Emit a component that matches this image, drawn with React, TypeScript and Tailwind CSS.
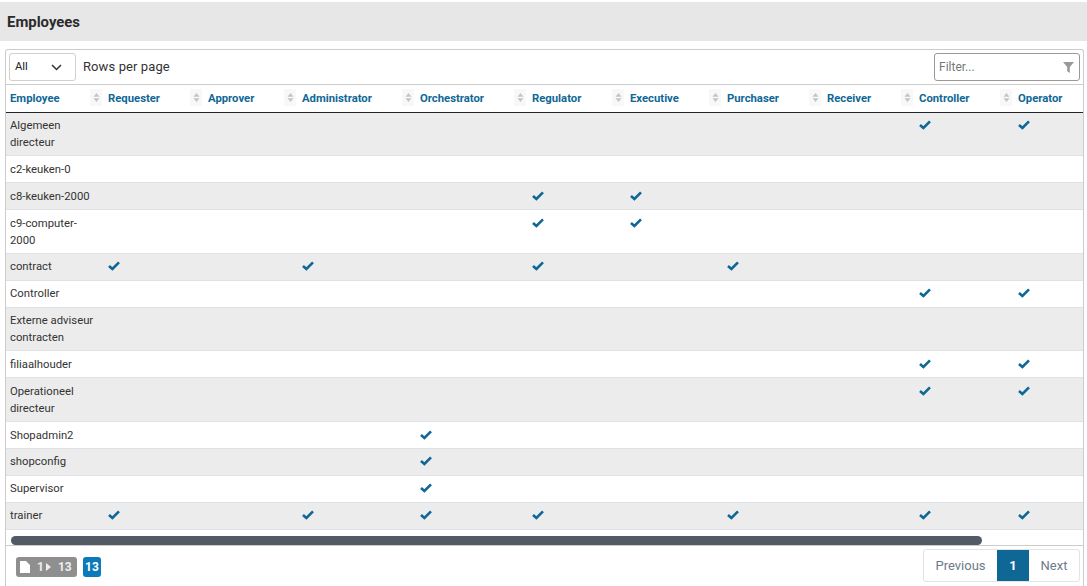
import React from "react";

const cols = [
  { n: "Employee", w: 98 },
  { n: "Requester", w: 100 },
  { n: "Approver", w: 94 },
  { n: "Administrator", w: 118 },
  { n: "Orchestrator", w: 112 },
  { n: "Regulator", w: 98 },
  { n: "Executive", w: 97 },
  { n: "Purchaser", w: 100 },
  { n: "Receiver", w: 92 },
  { n: "Controller", w: 99 },
  { n: "Operator", w: 100 },
];

const rows: { name: string[]; c: number[]; h: string; low: boolean }[] = [
  { name: ["Algemeen", "directeur"], c: [9, 10], h: "h-[43px]", low: false },
  { name: ["c2-keuken-0"], c: [], h: "h-[27px]", low: true },
  { name: ["c8-keuken-2000"], c: [5, 6], h: "h-[27px]", low: true },
  { name: ["c9-computer-", "2000"], c: [5, 6], h: "h-[44px]", low: true },
  { name: ["contract"], c: [1, 3, 5, 7], h: "h-[27px]", low: false },
  { name: ["Controller"], c: [9, 10], h: "h-[27px]", low: false },
  { name: ["Externe adviseur", "contracten"], c: [], h: "h-[43px]", low: false },
  { name: ["filiaalhouder"], c: [9, 10], h: "h-[27px]", low: true },
  { name: ["Operationeel", "directeur"], c: [9, 10], h: "h-[44px]", low: true },
  { name: ["Shopadmin2"], c: [4], h: "h-[27px]", low: true },
  { name: ["shopconfig"], c: [4], h: "h-[27px]", low: false },
  { name: ["Supervisor"], c: [4], h: "h-[27px]", low: false },
  { name: ["trainer"], c: [1, 3, 4, 5, 7, 9, 10], h: "h-[27px]", low: false },
];

function Check() {
  return (
    <svg width="12" height="10" viewBox="0 0 12 10" className="block">
      <path d="M1 5 L4.4 8 L11 1.4" fill="none" stroke="#0f6796" strokeWidth="2.6" />
    </svg>
  );
}

function Sort() {
  return (
    <span className="absolute right-[2px] top-[4px] flex h-[17px] w-[12px] items-center justify-center bg-[#f8f8f8]">
      <svg width="7" height="9" viewBox="0 0 7 9">
        <path d="M3.5 0 L6.5 3.7 H0.5 Z M0.5 5.3 H6.5 L3.5 9 Z" fill="#c4c4c4" />
      </svg>
    </span>
  );
}

export default function App() {
  return (
    <div className="h-[586px] w-[1087px] overflow-hidden bg-white font-['Roboto',sans-serif] text-[#212529]">
      <div className="mt-[2px] flex h-[39px] items-center bg-[#e7e7e7] pl-[7px] pt-[1px] text-[14.9px] font-bold text-[#2b2b2b]">
        Employees
      </div>
      <div className="ml-[5px] mt-[8px] h-[537px] w-[1079px] rounded-t-[3px] border border-b-0 border-[#cccccc]">
        <div className="flex h-[35px] items-center justify-between border-b border-[#cccccc] pl-[3px] pr-[3px]">
          <div className="flex items-center">
            <div className="flex h-[28px] w-[67px] items-center justify-between rounded-[3px] border border-[#d0d0d0] pl-[5px] pr-[13px] text-[11.3px]">
              <span>All</span>
              <svg width="11" height="7" viewBox="0 0 11 7">
                <path d="M1 1 L5.5 5.5 L10 1" fill="none" stroke="#333" strokeWidth="1.5" />
              </svg>
            </div>
            <span className="ml-[7px] text-[13px] tracking-[0.1px] text-[#333]">Rows per page</span>
          </div>
          <div className="flex h-[28px] w-[146px] items-center justify-between rounded-[3px] border border-[#999999] pl-[4px] pr-[5px] text-[12px] text-[#777]">
            <span>Filter...</span>
            <svg width="11" height="11" viewBox="0 0 11 11">
              <path d="M0 0 H11 L6.8 5 V11 L4.2 9.2 V5 Z" fill="#999" />
            </svg>
          </div>
        </div>
        <div className="h-[460px] overflow-hidden">
          <table className="w-[1108px] table-fixed border-collapse text-[11.3px]">
            <colgroup>
              {cols.map((c) => (
                <col key={c.n} style={{ width: c.w }} />
              ))}
            </colgroup>
            <thead>
              <tr className="h-[27px] border-b border-[#212529]">
                {cols.map((c, i) => (
                  <th key={c.n} className="relative p-0 pl-[4px] text-left font-bold text-[#0f6796]">
                    <span className="relative top-[1px]">{c.n}</span>
                    {i < 10 && <Sort />}
                  </th>
                ))}
              </tr>
            </thead>
            <tbody>
              {rows.map((r, i) => (
                <tr
                  key={r.name[0]}
                  className={r.h + " border-b border-[#dee2e6] " + (i % 2 === 0 ? "bg-[#ececec]" : "bg-white")}
                >
                  <td className="p-0 pl-[4px] align-top">
                    <div className={(r.low ? "pt-[5px]" : "pt-[4px]") + " leading-[17px] text-[#333]"}>
                      {r.name.map((l) => (
                        <div key={l}>{l}</div>
                      ))}
                    </div>
                  </td>
                  {cols.slice(1).map((c, j) => (
                    <td key={c.n} className="p-0 pl-[4px] align-top">
                      {r.c.includes(j + 1) && (
                        <div className={r.low ? "pt-[8px]" : "pt-[7px]"}>
                          <Check />
                        </div>
                      )}
                    </td>
                  ))}
                </tr>
              ))}
            </tbody>
          </table>
          <div className="ml-[5px] mt-[6px] h-[9px] w-[971px] rounded-[5px] bg-[#525a66]" />
        </div>
        <div className="flex h-[41px] items-start justify-between border-t border-[#cccccc] pl-[10px] pr-[3px]">
          <div className="mt-[11px] flex items-center gap-[6px] text-[12px] font-bold text-white">
            <div className="flex h-[20px] w-[61px] items-center rounded-[3px] bg-[#8f8f8f] pl-[4px]">
              <svg width="10" height="12" viewBox="0 0 10 12">
                <path d="M0 0 H6 L10 4 V12 H0 Z" fill="#fff" />
              </svg>
              <span className="ml-[7px] text-[#eeeeee]">1</span>
              <svg width="5" height="8" viewBox="0 0 5 8" className="ml-[2px]">
                <path d="M0 0 L5 4 L0 8 Z" fill="#eeeeee" />
              </svg>
              <span className="ml-[7px] text-[#eeeeee]">13</span>
            </div>
            <div className="flex h-[20px] w-[18px] items-center justify-center rounded-[3px] bg-[#0a7ab8]">13</div>
          </div>
          <div className="mt-[3px] flex h-[33px] w-[157px] items-stretch overflow-hidden rounded-[3px] border border-[#e3e3e3] text-[13px] text-[#6c7a89]">
            <div className="flex w-[73px] items-center justify-center">Previous</div>
            <div className="flex w-[32px] items-center justify-center bg-[#0f6796] font-bold text-white">1</div>
            <div className="flex flex-1 items-center justify-center">Next</div>
          </div>
        </div>
      </div>
    </div>
  );
}
